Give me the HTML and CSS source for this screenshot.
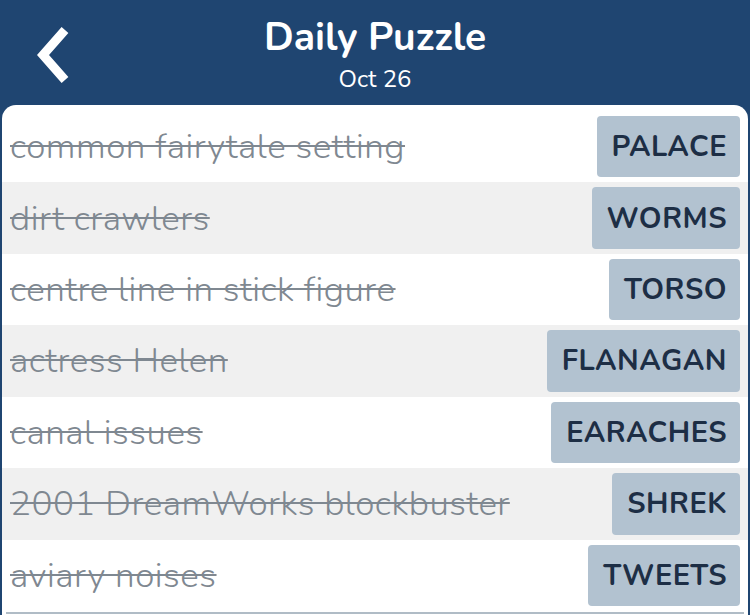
FILE: index.html
```html
<!DOCTYPE html>
<html lang="en">
<head>
  <meta charset="UTF-8">
  <meta name="viewport" content="width=device-width, initial-scale=1.0">
  <title>Daily Puzzle</title>
  <link rel="stylesheet" href="styles.css">
</head>
<body>
  <header class="top-bar">
    <button class="back-btn" aria-label="Back">
      <svg width="60" height="70" viewBox="0 0 60 70">
        <polyline points="45,10 23,35 45,60" fill="none" stroke="#fff" stroke-width="9" stroke-linecap="butt" stroke-linejoin="miter"/>
      </svg>
    </button>
    <div class="title-block">
      <h1>Daily Puzzle</h1>
      <p class="date">Oct 26</p>
    </div>
  </header>

  <main class="panel">
    <!-- Solved clues -->
    <ul class="clue-list">
      <li class="clue-row"><span class="clue">common fairytale setting</span><span class="answer">PALACE</span></li>
      <li class="clue-row"><span class="clue">dirt crawlers</span><span class="answer">WORMS</span></li>
      <li class="clue-row"><span class="clue">centre line in stick figure</span><span class="answer">TORSO</span></li>
      <li class="clue-row"><span class="clue">actress Helen</span><span class="answer">FLANAGAN</span></li>
      <li class="clue-row"><span class="clue">canal issues</span><span class="answer">EARACHES</span></li>
      <li class="clue-row"><span class="clue">2001 DreamWorks blockbuster</span><span class="answer">SHREK</span></li>
      <li class="clue-row"><span class="clue">aviary noises</span><span class="answer">TWEETS</span></li>
    </ul>
    <div class="panel-foot"></div>
  </main>
</body>
</html>
```

FILE: styles.css
```css
body {
  margin: 0;
  padding: 0;
  width: 750px;
  height: 615px;
  overflow: hidden;
  background: #1f4571;
  font-family: "Nunito", "Lato", "Open Sans", sans-serif;
}

.top-bar {
  position: relative;
  height: 105px;
  color: #fff;
  display: flex;
  justify-content: center;
}

.back-btn {
  position: absolute;
  left: 20px;
  top: 20px;
  background: none;
  border: none;
  padding: 0;
  cursor: pointer;
}

.back-btn svg {
  display: block;
}

.title-block {
  text-align: center;
  padding-top: 14px;
}

.title-block h1 {
  margin: 0;
  font-size: 39px;
  font-weight: 700;
  line-height: 48px;
}

.date {
  margin: 0;
  font-size: 24px;
  line-height: 34px;
}

.panel {
  margin: 0 2px;
  background: #fff;
  border-radius: 14px 14px 0 0;
  padding-top: 6px;
  height: 504px;
}

.clue-list {
  list-style: none;
  margin: 0;
  padding: 0;
}

.clue-row {
  height: 71.43px;
  box-sizing: border-box;
  display: flex;
  align-items: center;
  justify-content: space-between;
  padding: 5px 8px 5px 8px;
}

.clue-row:nth-child(even) {
  background: #f0f0f0;
}

.clue {
  color: #7f8891;
  font-size: 35px;
  font-weight: 300;
  letter-spacing: 0.5px;
  text-decoration: line-through;
  text-decoration-thickness: 2px;
}

.answer {
  height: 100%;
  display: flex;
  align-items: center;
  padding: 0 13px 0 15px;
  background: #b2c2d0;
  border-radius: 4px;
  color: #1d2e45;
  font-size: 29px;
  font-weight: 700;
  letter-spacing: 0.5px;
}

.panel-foot {
  height: 2px;
  margin: 1px 4px 0;
  background: #b0bcc6;
}
```
